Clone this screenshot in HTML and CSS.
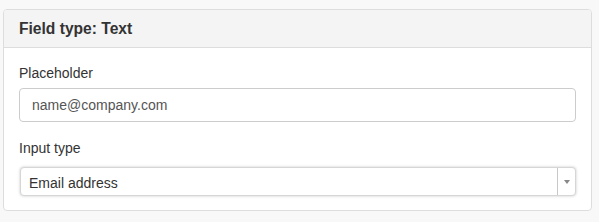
FILE: index.html
```html
<!DOCTYPE html>
<html>

<head>
  <meta charset="utf-8">
  <meta name="viewport" content="width=device-width, initial-scale=1">
  <title>Field settings</title>
  <link rel="stylesheet" href="styles.css">
</head>

<body>
  <div class="panel">
    <div class="panel-heading">
      <h3 class="panel-title">Field type: Text</h3>
    </div>
    <div class="panel-body">
      <div class="form-group">
        <label class="control-label" for="placeholder">Placeholder</label>
        <input class="form-control" type="text" id="placeholder" value="name@company.com">
      </div>
      <div class="form-group last">
        <label class="control-label">Input type</label>
        <div class="select-box">
          <span class="select-value">Email address</span>
          <span class="select-arrow"><b></b></span>
        </div>
      </div>
    </div>
  </div>
</body>
</html>
```

FILE: styles.css
```css
/* Boiler Plate */
*, ::after, ::before {
  box-sizing: border-box;
}
html {
  font-family: "Liberation Sans", Arial, sans-serif;
  font-size: 14px;
  color: #333;
  background: #f8f8f8;
}
body {
  margin: 0;
  padding: 9px 7px 0 3px;
}
/* Boiler Plate */

/* Panel */
.panel {
  background: #fff;
  border: 1px solid #ddd;
  border-radius: 4px;
  overflow: hidden;
}
.panel-heading {
  display: flex;
  align-items: center;
  height: 38px;
  padding: 0 15px;
  background: #f4f4f4;
  border-bottom: 1px solid #ddd;
}
.panel-title {
  margin: 0;
  font-size: 15.6px;
  font-weight: bold;
  color: #333;
}
.panel-body {
  padding: 15px 15px 14px;
}
/* Panel */

/* Form */
.form-group {
  margin-bottom: 16px;
}
.form-group.last {
  margin-bottom: 0;
}
.control-label {
  display: block;
  line-height: 20px;
  margin-bottom: 5px;
}
.form-control {
  display: block;
  width: 100%;
  height: 34px;
  padding: 0 12px;
  font: inherit;
  color: #555;
  background: #fff;
  border: 1px solid #ccc;
  border-radius: 4px;
  outline: 0;
}
.select-box {
  display: flex;
  height: 29px;
  margin-top: 9px;
  margin-left: 1px;
  background: #fff;
  border: 1px solid #d6d6d6;
  border-radius: 4px;
  box-shadow: 0 0 3px rgb(0 0 0 / 22%);
}
.select-value {
  flex: 1;
  padding: 3px 8px 0;
  line-height: 24px;
  color: #333;
}
.select-arrow {
  display: flex;
  align-items: center;
  justify-content: center;
  width: 18px;
  border-left: 1px solid #c8c8c8;
}
.select-arrow b {
  width: 0;
  height: 0;
  border-left: 3.5px solid transparent;
  border-right: 3.5px solid transparent;
  border-top: 4px solid #888;
  margin-top: 1px;
}
/* Form */
```
